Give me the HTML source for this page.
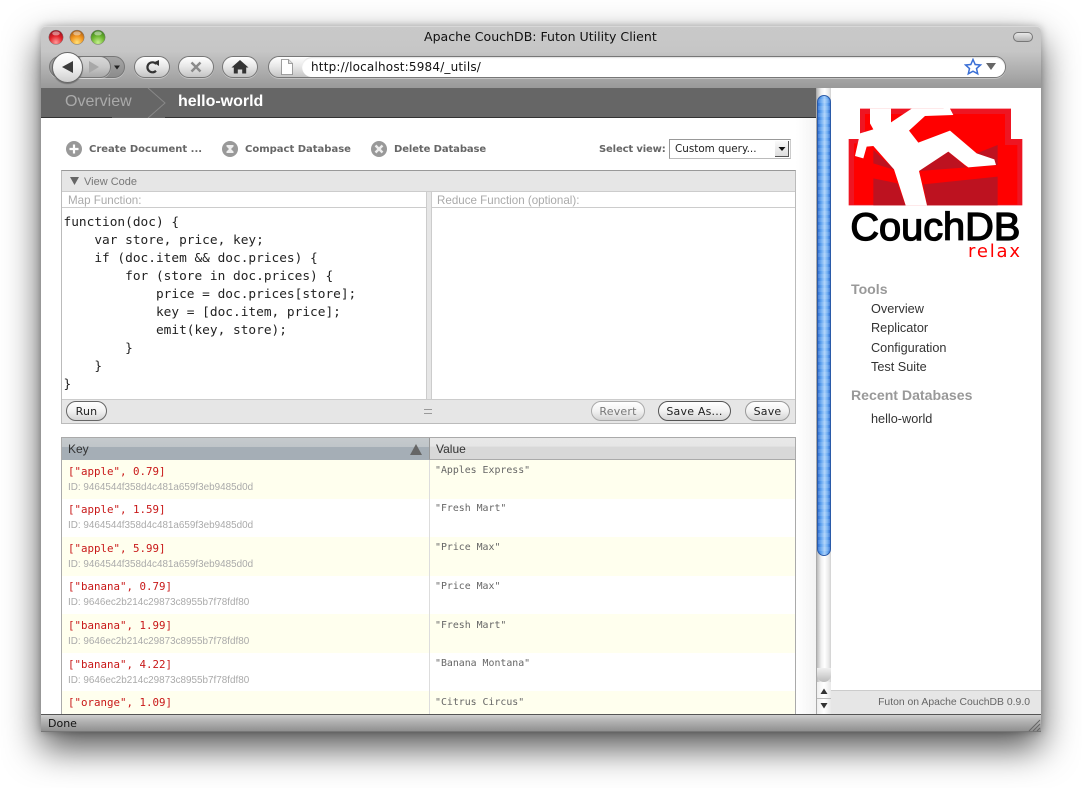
<!DOCTYPE html>
<html><head><meta charset="utf-8"><title>Apache CouchDB: Futon Utility Client</title>
<style>
html,body{margin:0;padding:0;background:#fff;width:1082px;height:788px;overflow:hidden}
div,span,svg{position:absolute;box-sizing:border-box}
.t{white-space:pre;line-height:1}
.lg{font-family:"DejaVu Sans",sans-serif}
.hv{font-family:"Liberation Sans",sans-serif}
.mn{font-family:"DejaVu Sans Mono",monospace}
#win{left:41px;top:26px;width:1000px;height:706px;background:#fff;border-radius:5px 5px 0 0;box-shadow:0 16px 36px rgba(0,0,0,.68),0 0 8px rgba(0,0,0,.25)}
.cap{height:22px;border-radius:11px;border:1px solid #777;background:linear-gradient(#fff,#e6e6e6 50%,#c4c4c4);box-shadow:0 1px 0 rgba(255,255,255,.35)}
.btn{height:20px;border-radius:10px;background:linear-gradient(#fff,#f2f2f2 50%,#d4d4d4);border:1px solid #808080;font:11px "DejaVu Sans",sans-serif;text-align:center;line-height:20px;color:#222;letter-spacing:.2px}
.k{left:68px;font:10.8px/1 "DejaVu Sans Mono",monospace;color:#c81818;white-space:pre;margin-top:1px}
.i{left:68px;font:9.9px/1 "Liberation Sans",sans-serif;color:#aaa;white-space:pre;margin-top:1px}
.v{left:435px;font:9.9px/1 "DejaVu Sans Mono",monospace;color:#666;white-space:pre}
.row{left:62px;width:733px;background:#ffe}
.nav{left:871px;font:12.7px/1 "Liberation Sans",sans-serif;color:#333;white-space:pre}
.h{left:851px;font:bold 14.1px/1 "Liberation Sans",sans-serif;color:#999;white-space:pre}
.act{font:bold 10px/11px "DejaVu Sans",sans-serif;color:#666;white-space:pre}
</style></head><body>
<div id="win"></div>

<!-- chrome -->
<div style="left:41px;top:26px;width:1000px;height:62px;border-radius:5px 5px 0 0;background:linear-gradient(#c9c9c9,#c6c6c6 40%,#9c9c9c 96%,#999);border-top:1px solid #d8d8d8"></div>
<div class="t lg" style="left:424px;top:29px;font-size:12.55px;color:#111;line-height:15px">Apache CouchDB: Futon Utility Client</div>

<svg style="left:46px;top:28px" width="64" height="20" viewBox="0 0 64 20">
<defs>
<radialGradient id="r" cx=".5" cy=".85" r=".75"><stop offset="0" stop-color="#ff9a9a"/><stop offset=".6" stop-color="#e3232a"/><stop offset="1" stop-color="#a01520"/></radialGradient>
<radialGradient id="y" cx=".5" cy=".85" r=".75"><stop offset="0" stop-color="#ffe27a"/><stop offset=".6" stop-color="#f0921c"/><stop offset="1" stop-color="#b0661a"/></radialGradient>
<radialGradient id="g" cx=".5" cy=".85" r=".75"><stop offset="0" stop-color="#c5f08f"/><stop offset=".6" stop-color="#6cb52f"/><stop offset="1" stop-color="#488a24"/></radialGradient>
</defs>
<circle cx="10" cy="9.300" r="7.200" fill="url(#r)" stroke="#777" stroke-width=".5"/><ellipse cx="10" cy="5.400" rx="3.800" ry="2" fill="#fff" opacity=".45"/>
<circle cx="31" cy="9.300" r="7.200" fill="url(#y)" stroke="#777" stroke-width=".5"/><ellipse cx="31" cy="5.400" rx="3.800" ry="2" fill="#fff" opacity=".45"/>
<circle cx="52" cy="9.300" r="7.200" fill="url(#g)" stroke="#777" stroke-width=".5"/><ellipse cx="52" cy="5.400" rx="3.800" ry="2" fill="#fff" opacity=".45"/>
</svg>
<div style="left:1013px;top:32px;width:20px;height:10px;border-radius:5px;border:1px solid #777;background:linear-gradient(#e8e8e8,#b5b5b5)"></div>

<!-- back / forward -->
<div class="cap" style="left:49px;top:56px;width:76px;background:linear-gradient(#a6a6a6,#8c8c8c)"></div>
<div class="cap" style="left:72px;top:56px;width:39px;background:linear-gradient(#d8d8d8,#c8c8c8 50%,#a8a8a8)"></div>
<div style="left:52px;top:52px;width:31px;height:31px;border-radius:50%;border:1px solid #666;background:linear-gradient(#fff,#f0f0f0 50%,#cfcfcf);box-shadow:0 1px 1px rgba(0,0,0,.3)"></div>
<svg style="left:46px;top:50px" width="80" height="34" viewBox="0 0 80 34">
<path d="M16 17l11-6v12z" fill="#3c3c3c"/>
<path d="M43 11l10 6-10 6z" fill="#a8a8a8"/>
<path d="M68 15.500h6l-3 4z" fill="#222"/>
</svg>
<div class="cap" style="left:134px;top:56px;width:36px"></div>
<div class="cap" style="left:178px;top:56px;width:36px"></div>
<div class="cap" style="left:222px;top:56px;width:36px"></div>
<svg style="left:134px;top:56px" width="126" height="22" viewBox="0 0 126 22">
<path d="M22 14.800a5 5 0 1 1 .2-6.800" fill="none" stroke="#333" stroke-width="2.200"/>
<path d="M19.500 6.500l5.500-2.500v6z" fill="#333"/>
<path d="M57.500 6.500l9 9M66.500 6.500l-9 9" stroke="#8a8a8a" stroke-width="2.400"/>
<path d="M106 4l8.500 7.500h-2.300v6h-4v-4h-4.400v4h-4v-6h-2.300z" fill="#333"/>
</svg>

<!-- url bar -->
<div class="cap" style="left:268px;top:56px;width:738px"></div>
<div style="left:302px;top:57px;width:703px;height:20px;border-radius:10px;background:#fff;box-shadow:inset 0 1px 1px rgba(0,0,0,.12)"></div>
<svg style="left:278px;top:57px" width="18" height="20" viewBox="0 0 18 20"><path d="M3.500 2.500h7l4 4v11h-11z" fill="#fff" stroke="#888" stroke-width=".8"/><path d="M10.500 2.500v4h4" fill="#ddd" stroke="#888" stroke-width=".8"/></svg>
<div class="t lg" style="left:311px;top:60px;font-size:12px;color:#111;letter-spacing:.19px;line-height:15px">http://localhost:5984/_utils/</div>
<svg style="left:964px;top:58px" width="34" height="18" viewBox="0 0 34 18"><path d="M9 1.500l2.200 5 5.300.5-4 3.500 1.200 5.300L9 13.200l-4.700 2.600 1.200-5.300-4-3.500 5.300-.5z" fill="#fff" stroke="#3a6fd6" stroke-width="1.500"/><path d="M22 5h10l-5 7z" fill="#666"/></svg>

<!-- breadcrumb -->
<div style="left:41px;top:88px;width:775px;height:30px;background:#666;border-bottom:1px solid #333"></div>
<div style="left:112px;top:117px;width:53px;height:1px;background:#666"></div>
<svg style="left:140px;top:88px;" width="40" height="30" viewBox="0 0 40 30"><path d="M8 0L25 15 8 30" fill="none" stroke="#888" stroke-width="1"/></svg>
<div class="t hv" style="left:65px;top:93px;font-size:16px;color:#aaa;line-height:18px">Overview</div>
<div class="t hv" style="left:178px;top:93px;font:bold 16px/18px 'Liberation Sans',sans-serif;color:#fff">hello-world</div>

<!-- page gradient -->
<div style="left:796px;top:118px;width:20px;height:596px;background:linear-gradient(90deg,#fff,#f3f3f3)"></div>

<!-- actions -->
<svg style="left:65px;top:140px" width="330" height="18" viewBox="0 0 330 18">
<circle cx="9" cy="9" r="8" fill="#999"/><path d="M9 4.500v9M4.500 9h9" stroke="#fff" stroke-width="2.200"/>
<circle cx="165" cy="9" r="8" fill="#999"/><path d="M161.500 5h7v1.500L166 9l2.500 2.500V13h-7v-1.500L164 9l-2.500-2.500z" fill="#eee"/>
<circle cx="314" cy="9" r="8" fill="#999"/><path d="M310.500 5.500l7 7M317.500 5.500l-7 7" stroke="#eee" stroke-width="2.400"/>
</svg>
<div class="act" style="left:89px;top:144px">Create Document ...</div>
<div class="act" style="left:245px;top:144px">Compact Database</div>
<div class="act" style="left:394px;top:144px;letter-spacing:-.1px">Delete Database</div>
<div class="act" style="left:599px;top:144px;letter-spacing:-.15px">Select view:</div>
<div style="left:669px;top:139px;width:122px;height:20px;background:#fff;border:1px solid #999;border-bottom-color:#bbb;border-right-color:#ccc"></div>
<div class="t lg" style="left:675px;top:144px;font-size:10.4px;color:#222">Custom query...</div>
<div style="left:775px;top:141px;width:14px;height:16px;background:linear-gradient(#fafafa,#ddd);border-right:1px solid #555;border-bottom:1px solid #555"></div>
<svg style="left:775px;top:141px" width="14" height="16"><path d="M3.500 6h7l-3.500 4z" fill="#111"/></svg>

<!-- editor -->
<div style="left:61px;top:170px;width:735px;height:254px;border:1px solid #bbb;border-top:1px solid #999;background:#fff"></div>
<div style="left:62px;top:171px;width:733px;height:21px;background:#e6e6e6;border-bottom:1px solid #ccc"></div>
<svg style="left:69px;top:176px" width="12" height="10"><path d="M1 1h9l-4.500 8z" fill="#666"/></svg>
<div class="t hv" style="left:84px;top:176px;font-size:11px;color:#777;line-height:13px">View Code</div>
<div style="left:62px;top:207px;width:733px;height:1px;background:#ccc"></div>
<div class="t hv" style="left:68px;top:194px;font-size:11.6px;color:#aaa;line-height:14px">Map Function:</div>
<div class="t hv" style="left:437px;top:194px;font-size:11.6px;color:#aaa;line-height:14px">Reduce Function (optional):</div>
<div style="left:426px;top:192px;width:6px;height:208px;background:#e6e6e6;border-left:1px solid #ccc;border-right:1px solid #ccc"></div>
<div class="mn" style="left:63.500px;top:214px;font-size:12.8px;line-height:18px;color:#222;white-space:pre">function(doc) {
    var store, price, key;
    if (doc.item &amp;&amp; doc.prices) {
        for (store in doc.prices) {
            price = doc.prices[store];
            key = [doc.item, price];
            emit(key, store);
        }
    }
}</div>
<div style="left:62px;top:399px;width:733px;height:24px;background:#e6e6e6;border-top:1px solid #ccc"></div>
<div class="btn" style="left:66px;top:401px;width:41px;border-color:#666;line-height:19px">Run</div>
<div style="left:424px;top:409px;width:8px;height:5px;border-top:1px solid #999;border-bottom:1px solid #999"></div>
<div class="btn" style="left:591px;top:401px;width:54px;color:#777;border-color:#aaa;line-height:19px">Revert</div>
<div class="btn" style="left:658px;top:401px;width:73px;border-color:#555;line-height:19px">Save As...</div>
<div class="btn" style="left:745px;top:401px;width:45px;border-color:#999;line-height:19px">Save</div>

<!-- table -->
<div style="left:61px;top:437px;width:735px;height:278px;border:1px solid #aaa;border-bottom:0;background:#fff"></div>
<div style="left:62px;top:438px;width:367px;height:22px;background:linear-gradient(#c5cacd,#c0c5c9 40%,#a5aeb6 42%,#a5aeb6)"></div>
<div style="left:429px;top:438px;width:366px;height:22px;background:linear-gradient(#e8e8e8,#e6e6e6 40%,#d8d8d8 42%,#d8d8d8);border-bottom:1px solid #aaa;border-left:1px solid #999"></div>
<div class="t hv" style="left:68px;top:443px;font-size:12px;color:#333;line-height:13px">Key</div>
<div class="t hv" style="left:436px;top:443px;font-size:12px;color:#333;line-height:13px">Value</div>
<svg style="left:409px;top:443px" width="14" height="13"><path d="M1 12L7 1l6 11z" fill="#666"/></svg>

<div class="row" style="top:460px;height:39px"></div>
<div class="row" style="top:537px;height:39px"></div>
<div class="row" style="top:614px;height:39px"></div>
<div class="row" style="top:691px;height:23px"></div>
<div style="left:429px;top:460px;width:1px;height:254px;background:#ddd"></div>

<div class="k" style="top:466px">["apple", 0.79]</div><div class="i" style="top:482px">ID: 9464544f358d4c481a659f3eb9485d0d</div><div class="v" style="top:466px">"Apples Express"</div>
<div class="k" style="top:504px">["apple", 1.59]</div><div class="i" style="top:520px">ID: 9464544f358d4c481a659f3eb9485d0d</div><div class="v" style="top:504px">"Fresh Mart"</div>
<div class="k" style="top:543px">["apple", 5.99]</div><div class="i" style="top:559px">ID: 9464544f358d4c481a659f3eb9485d0d</div><div class="v" style="top:543px">"Price Max"</div>
<div class="k" style="top:581px">["banana", 0.79]</div><div class="i" style="top:597px">ID: 9646ec2b214c29873c8955b7f78fdf80</div><div class="v" style="top:582px">"Price Max"</div>
<div class="k" style="top:620px">["banana", 1.99]</div><div class="i" style="top:636px">ID: 9646ec2b214c29873c8955b7f78fdf80</div><div class="v" style="top:621px">"Fresh Mart"</div>
<div class="k" style="top:659px">["banana", 4.22]</div><div class="i" style="top:675px">ID: 9646ec2b214c29873c8955b7f78fdf80</div><div class="v" style="top:659px">"Banana Montana"</div>
<div class="k" style="top:697px">["orange", 1.09]</div><div class="v" style="top:698px">"Citrus Circus"</div>

<!-- scrollbar -->
<div style="left:816px;top:88px;width:15px;height:626px;background:linear-gradient(90deg,#bbb,#f0f0f0 30%,#fff 55%,#e8e8e8 85%,#d0d0d0);border-left:1px solid #aaa"></div>
<div style="left:817px;top:95px;width:13.500px;height:461px;border-radius:7px;border:1px solid #2a5aa8;background:repeating-linear-gradient(#fff0 0,#fff0 3px,rgba(255,255,255,.12) 3px,rgba(255,255,255,.12) 7px),linear-gradient(90deg,#2f6fd2,#5ea2ee 25%,#a8d0fb 55%,#6aaaf0 80%,#2f6fd2)"></div>
<div style="left:817px;top:668px;width:14px;height:14px;border-radius:0 0 7px 7px;background:linear-gradient(#f0f0f0,#bbb)"></div>
<div style="left:817px;top:682px;width:14px;height:32px;background:linear-gradient(90deg,#eee,#fff 50%,#e8e8e8)"></div>
<div style="left:817px;top:698px;width:14px;height:1px;background:#bbb"></div>
<svg style="left:817px;top:682px" width="14" height="32"><path d="M3.500 12L7 6.500l3.500 5.500zM3.500 21L7 26.500l3.500-5.500z" fill="#333"/></svg>

<!-- sidebar -->
<svg style="left:810px;top:90px" width="240" height="180" viewBox="0 0 720 540">
<path d="M150 56H603V147H637V346H116V147H150z" fill="#ee1522"/>
<path d="M132 160H165V72H585V165H622V344H132z" fill="#f00"/>
<path d="M190 265L262 280 287 346H190z" fill="#bd1220"/>
<path d="M340 283L563 260V346H351z" fill="#bd1220"/>
<path d="M190 180L255 240 190 220z" fill="#bd1220"/>
<path d="M327 243L415 185 470 232z" fill="#bd1220"/>
<path d="M475 232L500 190 563 165V225z" fill="#bd1220"/>
<path d="M150 130L190 118 180 100V56H243V97L305 56H400L418 52 430 75 345 78 297 122 325 158 420 122 500 190 553 208 558 225 475 232 465 225 415 185 327 243 351 346H287L252 238 190 168 170 170 160 205 135 198z" fill="#fff"/>
<text x="121" y="450" font-family="'Liberation Sans',sans-serif" font-size="118" stroke="#000" stroke-width="4" textLength="510" lengthAdjust="spacingAndGlyphs" fill="#000">CouchDB</text>
<text x="474" y="501" font-family="'DejaVu Sans',sans-serif" font-size="54" fill="#f00" textLength="156" lengthAdjust="spacing">relax</text>
</svg>
<div class="h" style="top:282px">Tools</div>
<div class="nav" style="top:303px">Overview</div>
<div class="nav" style="top:322px">Replicator</div>
<div class="nav" style="top:342px">Configuration</div>
<div class="nav" style="top:361px">Test Suite</div>
<div class="h" style="top:388px">Recent Databases</div>
<div class="nav" style="top:413px">hello-world</div>
<div style="left:831px;top:690px;width:210px;height:24px;background:#e6e6e6;border-top:1px solid #ccc"></div>
<div class="t hv" style="right:52px;top:696px;font-size:10.4px;color:#666;line-height:13px">Futon on Apache CouchDB 0.9.0</div>

<!-- status bar -->
<div style="left:41px;top:714px;width:1000px;height:18px;background:linear-gradient(#d0d0d0,#b8b8b8 30%,#909090);border-top:1px solid #555;border-bottom:1px solid #777"></div>
<div class="t lg" style="left:48px;top:717px;font-size:11px;color:#111;line-height:14px">Done</div>
<svg style="left:1028px;top:719px" width="13" height="13"><path d="M1 12L12 1M5 12l7-7M9 12l3-3" stroke="#666" stroke-width="1"/></svg>
</body></html>
